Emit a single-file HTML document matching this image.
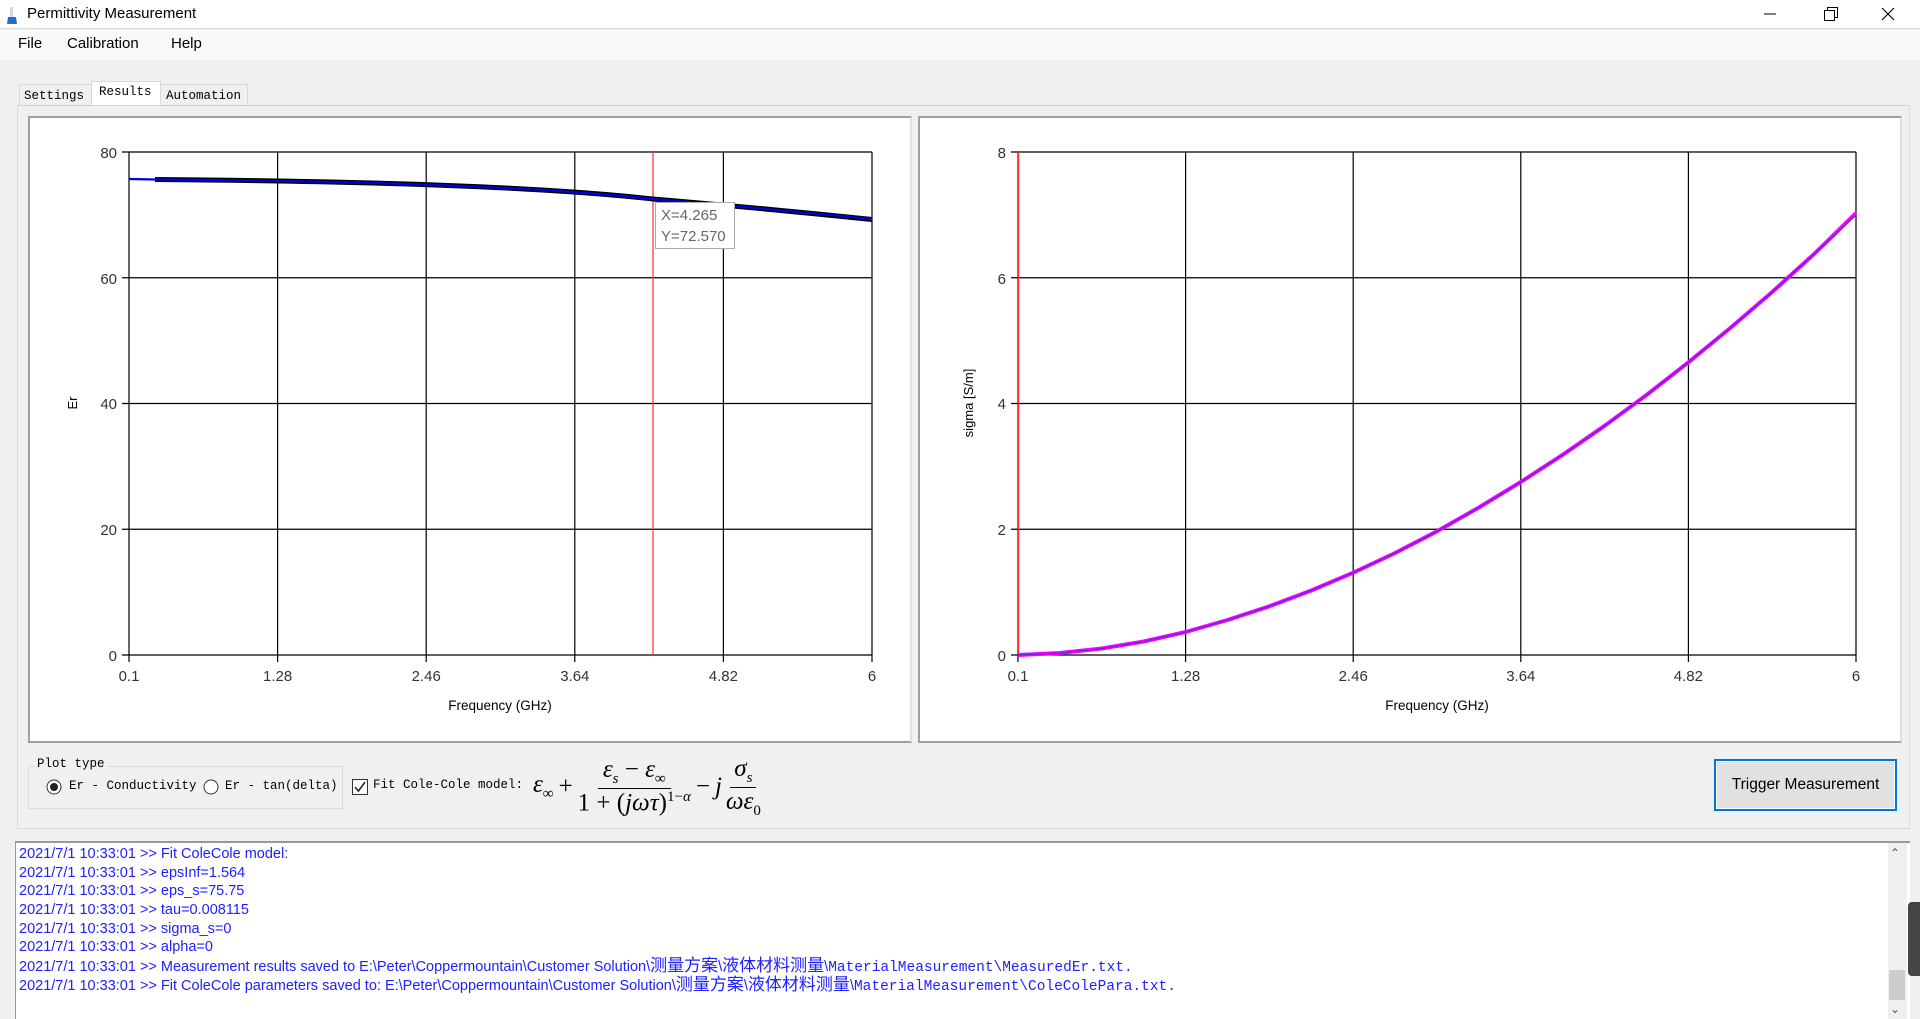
<!DOCTYPE html>
<html><head><meta charset="utf-8"><style>
*{margin:0;padding:0;box-sizing:border-box}
body{width:1920px;height:1019px;background:#f0f0f0;position:relative;overflow:hidden;font-family:"Liberation Sans",sans-serif}
.abs{position:absolute}
.mono{font-family:"Liberation Mono","Noto Sans CJK SC",monospace;font-size:12.5px;color:#000}
.log div{height:18.7px;line-height:18.7px;white-space:nowrap}
</style></head><body>
<div class="abs" style="left:0;top:0;width:1920px;height:29px;background:#fff;border-bottom:1px solid #ddd"></div>
<svg class="abs" style="left:6px;top:7px" width="12" height="18"><rect x="4" y="0" width="3" height="10" fill="#cfd8e6"/><path d="M2 10h8l1 7H1z" fill="#1e6fd0"/></svg>
<div class="abs" style="left:27px;top:5px;font-size:15px;color:#000">Permittivity Measurement</div>
<svg class="abs" style="left:1755px;top:5px" width="160" height="20"><path d="M9 9h12" stroke="#000" stroke-width="1"/><rect x="69.5" y="5.5" width="10" height="10" fill="none" stroke="#000"/><path d="M72.5 5.5v-3h10v10h-3" fill="none" stroke="#000"/><path d="M127 3l12 12M139 3l-12 12" stroke="#000" stroke-width="1.1"/></svg>
<div class="abs" style="left:0;top:30px;width:1920px;height:30px;background:#f9f9f9"></div>
<div class="abs" style="left:18px;top:35px;font-size:15px">File</div>
<div class="abs" style="left:67px;top:35px;font-size:15px">Calibration</div>
<div class="abs" style="left:171px;top:35px;font-size:15px">Help</div>
<div class="abs mono" style="left:19px;top:84px;width:73px;height:22px;border:1px solid #d9d9d9;background:#f0f0f0;padding:4px 0 0 4px">Settings</div>
<div class="abs mono" style="left:91px;top:81px;width:70px;height:25px;border:1px solid #d9d9d9;border-bottom:none;background:#fff;padding:3px 0 0 7px">Results</div>
<div class="abs mono" style="left:160px;top:84px;width:88px;height:22px;border:1px solid #d9d9d9;background:#f0f0f0;padding:4px 0 0 5px">Automation</div>
<div class="abs" style="left:17px;top:105px;width:1893px;height:724px;border:1px solid #dadada;border-top:1px solid #d0d0d0;background:#f0f0f0"></div>
<div class="abs" style="left:28px;top:116px;width:884px;height:627px;background:#fff;border:2px solid #a0a0a0;border-right-color:#e0e0e0;border-bottom-color:#a0a0a0"></div>
<div class="abs" style="left:918px;top:116px;width:984px;height:627px;background:#fff;border:2px solid #a0a0a0;border-right-color:#e0e0e0"></div>
<svg class="abs" style="left:0;top:0" width="1920" height="760" font-family="Liberation Sans" font-size="15" fill="#333">
<g stroke="#000" stroke-width="1.2">
<path d="M129 152V662M277.6 152V662M426.2 152V662M574.8 152V662M723.4 152V662M872 152V662"/>
<path d="M122 152H872M122 277.75H872M122 403.5H872M122 529.25H872M122 655H872"/>
<path d="M1018 152V662M1185.6 152V662M1353.2 152V662M1520.8 152V662M1688.4 152V662M1856 152V662"/>
<path d="M1011 152H1856M1011 277.75H1856M1011 403.5H1856M1011 529.25H1856M1011 655H1856"/>
</g>
<path d="M653 152V655" stroke="#ff3030" stroke-width="1.2"/>
<path d="M1018.5 152V655" stroke="#ff3030" stroke-width="1.5"/>
<path d="M155 179.5 Q500 182 653 199 Q760 208 872 219.5" stroke="#000" stroke-width="5" fill="none"/>
<path d="M129 179 L155 179.5 Q500 182 653 199 Q760 208 872 219" stroke="#0000e0" stroke-width="2.2" fill="none"/>
<path d="M1018 655L1060 653L1101.8 648.5L1143.7 641.5L1185.6 632L1227.5 620L1269.4 606.3L1311.3 590.5L1353.2 572.7L1395.1 553L1437 531.3L1478.9 507.5L1520.8 482L1562.7 454.8L1604.6 425.8L1646.5 395L1688.4 362.3L1730.3 328L1772.2 292L1814.1 254L1856 213" stroke="#ff00ff" stroke-width="4" fill="none" stroke-linejoin="round"/>
<path d="M1018 655L1060 653L1101.8 648.5L1143.7 641.5L1185.6 632L1227.5 620L1269.4 606.3L1311.3 590.5L1353.2 572.7L1395.1 553L1437 531.3L1478.9 507.5L1520.8 482L1562.7 454.8L1604.6 425.8L1646.5 395L1688.4 362.3L1730.3 328L1772.2 292L1814.1 254L1856 215" stroke="#5030e0" stroke-width="1.3" fill="none" stroke-linejoin="round"/>
<g text-anchor="end"><text x="117" y="158">80</text><text x="117" y="284">60</text><text x="117" y="409">40</text><text x="117" y="535">20</text><text x="117" y="661">0</text>
<text x="1006" y="158">8</text><text x="1006" y="284">6</text><text x="1006" y="409">4</text><text x="1006" y="535">2</text><text x="1006" y="661">0</text></g>
<g text-anchor="middle"><text x="129" y="681">0.1</text><text x="277.6" y="681">1.28</text><text x="426.2" y="681">2.46</text><text x="574.8" y="681">3.64</text><text x="723.4" y="681">4.82</text><text x="872" y="681">6</text>
<text x="1018" y="681">0.1</text><text x="1185.6" y="681">1.28</text><text x="1353.2" y="681">2.46</text><text x="1520.8" y="681">3.64</text><text x="1688.4" y="681">4.82</text><text x="1856" y="681">6</text>
<text x="500" y="710" font-size="13.5" fill="#000">Frequency (GHz)</text><text x="1437" y="710" font-size="13.5" fill="#000">Frequency (GHz)</text>
<text transform="translate(77 403) rotate(-90)" font-size="13" fill="#000">Er</text>
<text transform="translate(973 403) rotate(-90)" font-size="13" fill="#000">sigma [S/m]</text></g>
<rect x="655.5" y="202.5" width="79" height="46" fill="#fff" stroke="#aaa"/>
<text x="661" y="220" font-size="15" fill="#666">X=4.265</text><text x="661" y="241" font-size="15" fill="#666">Y=72.570</text>
</svg>
<div class="abs" style="left:28px;top:766px;width:315px;height:43px;border:1px solid #dcdcdc"></div>
<div class="abs mono" style="left:35px;top:757px;background:#f0f0f0;padding:0 2px">Plot type</div>
<svg class="abs" style="left:45px;top:778px" width="320" height="18"><circle cx="9" cy="9" r="7" fill="#fff" stroke="#333"/><circle cx="9" cy="9" r="4" fill="#222"/><circle cx="166" cy="9" r="7" fill="#fff" stroke="#333"/></svg>
<svg class="abs" style="left:351px;top:778px" width="18" height="18"><rect x="1.5" y="1.5" width="15" height="15" fill="#fff" stroke="#333"/><path d="M4 9l3.5 4L14 4" stroke="#222" stroke-width="1.5" fill="none"/></svg>
<div class="abs mono" style="left:69px;top:779px">Er - Conductivity</div>
<div class="abs mono" style="left:225px;top:779px">Er - tan(delta)</div>
<div class="abs mono" style="left:373px;top:778px">Fit Cole-Cole model:</div>
<div class="abs" style="left:533px;top:755px;font-family:'Liberation Serif',serif;font-style:italic;font-size:25px;color:#000;height:64px;display:flex;align-items:center;white-space:nowrap">
<span>ε<sub style="font-size:15px">∞</sub></span><span style="font-style:normal;margin:0 5px">+</span>
<span style="display:inline-flex;flex-direction:column;align-items:center"><span style="border-bottom:1.5px solid #000;padding:0 5px">ε<sub style="font-size:15px">s</sub> <span style="font-style:normal">−</span> ε<sub style="font-size:15px">∞</sub></span><span><span style="font-style:normal">1 + (</span>jωτ<span style="font-style:normal">)</span><sup style="font-size:15px"><span style="font-style:normal">1−</span>α</sup></span></span>
<span style="font-style:normal;margin:0 5px">−</span><span>j</span>
<span style="display:inline-flex;flex-direction:column;align-items:center;margin-left:4px"><span style="border-bottom:1.5px solid #000;padding:0 4px">σ<sub style="font-size:15px">s</sub></span><span>ωε<sub style="font-size:15px;font-style:normal">0</sub></span></span>
</div>
<div class="abs" style="left:1714px;top:759px;width:183px;height:52px;border:2px solid #0078d7;background:#e1e1e1;font-size:15.5px;text-align:center;line-height:48px;box-shadow:inset 0 0 0 1px #fff">Trigger Measurement</div>
<div class="abs" style="left:15px;top:841px;width:1895px;height:178px;background:#fff;border-top:2px solid #999;border-left:1px solid #999"></div>
<div class="abs log" style="left:19px;top:845px;font-size:14.5px;color:#2020ff;font-family:'Liberation Sans','Noto Sans CJK SC',sans-serif">
<div>2021/7/1 10:33:01 &gt;&gt; Fit ColeCole model:</div>
<div>2021/7/1 10:33:01 &gt;&gt; epsInf=1.564</div>
<div>2021/7/1 10:33:01 &gt;&gt; eps_s=75.75</div>
<div>2021/7/1 10:33:01 &gt;&gt; tau=0.008115</div>
<div>2021/7/1 10:33:01 &gt;&gt; sigma_s=0</div>
<div>2021/7/1 10:33:01 &gt;&gt; alpha=0</div>
<div>2021/7/1 10:33:01 &gt;&gt; Measurement results saved to E:\Peter\Coppermountain\Customer Solution\<span style="font-size:17px">测量方案</span>\<span style="font-size:17px">液体材料测量</span>\<span style="font-family:'Liberation Mono','Noto Sans CJK SC',monospace;font-size:14.5px">MaterialMeasurement\MeasuredEr.txt.</span></div>
<div>2021/7/1 10:33:01 &gt;&gt; Fit ColeCole parameters saved to: E:\Peter\Coppermountain\Customer Solution\<span style="font-size:17px">测量方案</span>\<span style="font-size:17px">液体材料测量</span>\<span style="font-family:'Liberation Mono','Noto Sans CJK SC',monospace;font-size:14.5px">MaterialMeasurement\ColeColePara.txt.</span></div>
</div>
<div class="abs" style="left:1888px;top:843px;width:19px;height:176px;background:#f0f0f0"></div>
<div class="abs" style="left:1889px;top:970px;width:16px;height:30px;background:#cdcdcd"></div>
<div class="abs" style="left:1890px;top:846px;font-size:12px;color:#555">&#8963;</div>
<div class="abs" style="left:1890px;top:1002px;font-size:12px;color:#555">&#8964;</div>
<div class="abs" style="left:1908px;top:902px;width:12px;height:74px;background:#444;border-radius:4px 0 0 4px"></div>
</body></html>
